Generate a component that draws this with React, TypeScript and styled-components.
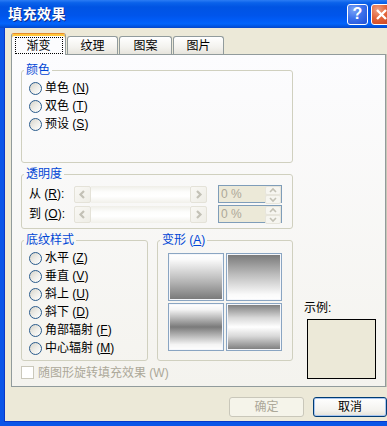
import styled, { createGlobalStyle } from 'styled-components'

const GlobalStyle = createGlobalStyle`
  html, body {
    margin: 0;
    padding: 0;
  }
  body {
    width: 387px;
    height: 426px;
    overflow: hidden;
    background: #ece9d8;
    font-family: 'Liberation Sans', 'Noto Sans CJK SC', sans-serif;
    font-size: 12px;
    color: #000;
  }
`

const Window = styled.div`
  width: 395px;
  height: 426px;
  display: flex;
  flex-direction: column;
`

const TitleBar = styled.div`
  flex: none;
  height: 28px;
  display: flex;
  align-items: center;
  gap: 3px;
  padding: 0 3px 0 8px;
  background: linear-gradient(
    to bottom,
    #2b7cf4 0%,
    #0a62ea 10%,
    #0054e3 25%,
    #0055eb 55%,
    #005bf5 70%,
    #0264fb 85%,
    #0054e0 94%,
    #0846c8 100%
  );
`

const TitleText = styled.div`
  flex: 1;
  color: #fff;
  font-size: 14px;
  font-weight: bold;
  line-height: 16px;
  letter-spacing: 0.5px;
  text-shadow: 1px 1px 0 #0a2a8a;
`

const TitleButton = styled.div<{ $kind: 'help' | 'close' }>`
  flex: none;
  box-sizing: border-box;
  width: 21px;
  height: 21px;
  border: 1px solid #fff;
  border-radius: 3px;
  display: flex;
  align-items: center;
  justify-content: center;
  color: #fff;
  font: bold 16px/1 'Liberation Sans', sans-serif;
  background: ${p =>
    p.$kind === 'help'
      ? 'radial-gradient(circle at 30% 25%, #7ba4f7 0%, #3d72ec 45%, #1d4fd6 100%)'
      : 'radial-gradient(circle at 30% 25%, #f0a184 0%, #e2643a 45%, #c9401b 100%)'};
`

const Frame = styled.div`
  flex: 1;
  display: flex;
  flex-direction: column;
  border: 4px solid #0a55e8;
  border-top: none;
  box-shadow: inset 1px 0 0 #0838c8, inset -1px 0 0 #0838c8, inset 0 -1px 0 #0838c8;
  background: #ece9d8;
`

const TabStrip = styled.div`
  flex: none;
  height: 26px;
  display: flex;
  align-items: flex-end;
  gap: 1px;
  padding-left: 7px;
`

const Tab = styled.div<{ $active?: boolean; $width: number }>`
  position: relative;
  box-sizing: border-box;
  width: ${p => p.$width}px;
  height: ${p => (p.$active ? 22 : 18)}px;
  margin-bottom: ${p => (p.$active ? -1 : 0)}px;
  z-index: ${p => (p.$active ? 1 : 0)};
  border: 1px solid #919b9c;
  border-bottom: none;
  border-top-color: ${p => (p.$active ? '#e68b2c' : '#919b9c')};
  border-radius: 3px 3px 0 0;
  box-shadow: ${p => (p.$active ? 'inset 0 2px 0 #ffc83c' : 'none')};
  background: ${p => (p.$active ? '#fcfcfe' : 'linear-gradient(#ffffff, #f3f2ee 60%, #e6e4dc)')};
  display: flex;
  justify-content: center;
  align-items: ${p => (p.$active ? 'flex-start' : 'center')};
  padding-top: ${p => (p.$active ? 3 : 0)}px;
  line-height: 14px;
`

const FocusLabel = styled.span`
  box-sizing: border-box;
  width: 48px;
  height: 17px;
  border: 1px dotted #000;
  display: flex;
  align-items: center;
  justify-content: center;
`

const Panel = styled.div`
  flex: none;
  box-sizing: border-box;
  height: 333px;
  margin: 0 5px 0 7px;
  border: 1px solid #919b9c;
  box-shadow: 1px 0 0 #c9c6b6, 2px 0 0 #dcd9cb;
  background: linear-gradient(#fcfcfe, #f4f3ee);
  padding: 8px 0 7px 9px;
  display: grid;
  grid-template-columns: 272px 1fr;
  column-gap: 11px;
`

const LeftColumn = styled.div`
  display: flex;
  flex-direction: column;
`

const Group = styled.fieldset<{ $height: number; $width?: number; $gap?: number }>`
  box-sizing: border-box;
  width: ${p => (p.$width ? `${p.$width}px` : 'auto')};
  height: ${p => p.$height}px;
  margin: 0 0 ${p => p.$gap ?? 0}px 0;
  padding: 0;
  min-width: 0;
  border: 1px solid #d0d0bf;
  border-radius: 3px;
`

const GroupTitle = styled.legend`
  margin-left: 2px;
  padding: 0 2px;
  color: #0046d5;
  font-size: 12px;
  line-height: 14px;
`

const OptionList = styled.div`
  padding: 2px 0 0 7px;
  display: flex;
  flex-direction: column;
`

const OptionRow = styled.label`
  height: 18px;
  display: flex;
  align-items: center;
  gap: 3px;
  line-height: 14px;
  white-space: nowrap;
`

const Radio = styled.span`
  flex: none;
  box-sizing: border-box;
  width: 13px;
  height: 13px;
  border-radius: 50%;
  border: 1px solid #2a5b8c;
  background: linear-gradient(135deg, #d6d3c9 0%, #eeede8 50%, #ffffff 100%);
`

const Mnemonic = styled.u`
  text-underline-offset: 1px;
`

const SliderList = styled.div`
  padding: 4px 0 0 7px;
  display: flex;
  flex-direction: column;
  gap: 2px;
`

const SliderRow = styled.div`
  height: 18px;
  display: flex;
  align-items: center;
`

const RowLabel = styled.span`
  width: 45px;
  line-height: 14px;
  white-space: nowrap;
`

const ScrollBar = styled.div`
  width: 133px;
  height: 17px;
  margin-right: 11px;
  display: flex;
`

const ScrollTrack = styled.div`
  flex: 1;
  background: linear-gradient(#efeee8, #fdfdfc 35%, #ffffff 60%, #f1f0ea);
`

const ArrowButton = styled.div`
  box-sizing: border-box;
  width: 17px;
  height: 17px;
  border: 1px solid #e4e2d8;
  border-radius: 2px;
  background: linear-gradient(135deg, #f9f8f4, #eeede6);
  display: flex;
  align-items: center;
  justify-content: center;
`

const SpinBox = styled.div`
  box-sizing: border-box;
  width: 64px;
  height: 18px;
  border: 1px solid #7f9db9;
  background: #ece9d8;
  display: flex;
  align-items: center;
`

const SpinText = styled.span`
  flex: 1;
  padding-left: 2px;
  color: #aca899;
  line-height: 14px;
`

const SpinButtons = styled.div`
  width: 16px;
  height: 16px;
  display: flex;
  flex-direction: column;
`

const SpinButton = styled.div`
  flex: 1;
  box-sizing: border-box;
  border: 1px solid #e7e5dc;
  border-radius: 2px;
  background: #f6f5f0;
  display: flex;
  align-items: center;
  justify-content: center;
`

const GroupRow = styled.div`
  display: flex;
  gap: 9px;
  margin-bottom: 5px;
`

const TileGrid = styled.div`
  padding: 6px 0 0 10px;
  display: grid;
  grid-template-columns: 56px 56px;
  grid-auto-rows: 48px;
  gap: 2px;
`

const gradients = {
  down: 'linear-gradient(#ffffff 0%, #fafafa 12%, #bdbdbd 55%, #777777 100%)',
  up: 'linear-gradient(#777777 0%, #bdbdbd 45%, #fafafa 88%, #ffffff 100%)',
  middle: 'linear-gradient(#ffffff 0%, #f4f4f4 12%, #7a7a7a 50%, #f4f4f4 88%, #ffffff 100%)',
  edges: 'linear-gradient(#7a7a7a 0%, #d8d8d8 30%, #ffffff 50%, #d8d8d8 70%, #7a7a7a 100%)',
}

const Tile = styled.div<{ $kind: keyof typeof gradients }>`
  box-sizing: border-box;
  border: 1px solid #8aa5c2;
  box-shadow: inset 0 0 0 1px #f4f6fa;
  background: ${p => gradients[p.$kind]};
`

const CheckRow = styled.div`
  height: 13px;
  display: flex;
  align-items: center;
  gap: 4px;
  color: #aca899;
  line-height: 14px;
  white-space: nowrap;
`

const CheckBox = styled.span`
  box-sizing: border-box;
  width: 13px;
  height: 13px;
  border: 1px solid #cac8bb;
  background: #fff;
`

const SampleColumn = styled.div`
  display: flex;
  flex-direction: column;
  justify-content: flex-end;
`

const SampleLabel = styled.div`
  line-height: 14px;
  margin-bottom: 4px;
`

const SampleBox = styled.div`
  box-sizing: border-box;
  width: 69px;
  height: 60px;
  margin-left: 3px;
  border: 1px solid #000;
  background: #ece9d8;
`

const ButtonRow = styled.div`
  display: flex;
  justify-content: flex-end;
  gap: 9px;
  padding: 10px 4px 0 0;
`

const Button = styled.button<{ $width: number; $default?: boolean }>`
  box-sizing: border-box;
  width: ${p => p.$width}px;
  height: 20px;
  padding: 0;
  border: 1px solid #003c74;
  border-radius: 3px;
  background: linear-gradient(#ffffff, #f3f2ee 70%, #e4e2d8);
  box-shadow: ${p => (p.$default ? 'inset 0 0 0 1px #a9c6f0' : 'none')};
  font: 12px/14px 'Liberation Sans', 'Noto Sans CJK SC', sans-serif;
  color: #000;

  &:disabled {
    border-color: #c9c7ba;
    background: #f5f4ea;
    color: #aca899;
  }
`

const Chevron = ({ dir }: { dir: 'left' | 'right' | 'up' | 'down' }) => {
  const d = {
    left: 'M9 4 L5.5 7.5 L9 11',
    right: 'M6 4 L9.5 7.5 L6 11',
    up: 'M4 5 L7 2 L10 5',
    down: 'M4 2 L7 5 L10 2',
  }[dir]
  const small = dir === 'up' || dir === 'down'
  return (
    <svg width={small ? 14 : 15} height={small ? 7 : 15} viewBox={small ? '0 0 14 7' : '0 0 15 15'}>
      <path d={d} fill="none" stroke="#c3c1b6" strokeWidth={small ? 1.6 : 2.2} />
    </svg>
  )
}

const colorOptions = [
  { text: '单色', key: 'N' },
  { text: '双色', key: 'T' },
  { text: '预设', key: 'S' },
]

const shadeOptions = [
  { text: '水平', key: 'Z' },
  { text: '垂直', key: 'V' },
  { text: '斜上', key: 'U' },
  { text: '斜下', key: 'D' },
  { text: '角部辐射', key: 'F' },
  { text: '中心辐射', key: 'M' },
]

const sliders = [
  { text: '从', key: 'R' },
  { text: '到', key: 'O' },
]

const tabs = [
  { text: '渐变', width: 55 },
  { text: '纹理', width: 51 },
  { text: '图案', width: 53 },
  { text: '图片', width: 51 },
]

export default function App() {
  return (
    <>
      <GlobalStyle />
      <Window>
        <TitleBar>
          <TitleText>填充效果</TitleText>
          <TitleButton $kind="help">?</TitleButton>
          <TitleButton $kind="close">
            <svg width="13" height="13" viewBox="0 0 13 13">
              <path d="M2 2 L11 11 M11 2 L2 11" stroke="#fff" strokeWidth="2.4" />
            </svg>
          </TitleButton>
        </TitleBar>
        <Frame>
          <TabStrip>
            {tabs.map((t, i) => (
              <Tab key={t.text} $active={i === 0} $width={t.width}>
                {i === 0 ? <FocusLabel>{t.text}</FocusLabel> : t.text}
              </Tab>
            ))}
          </TabStrip>
          <Panel>
            <LeftColumn>
              <Group $height={100} $gap={4}>
                <GroupTitle>颜色</GroupTitle>
                <OptionList>
                  {colorOptions.map(o => (
                    <OptionRow key={o.key}>
                      <Radio />
                      <span>
                        {o.text} (<Mnemonic>{o.key}</Mnemonic>)
                      </span>
                    </OptionRow>
                  ))}
                </OptionList>
              </Group>
              <Group $height={62} $gap={4}>
                <GroupTitle>透明度</GroupTitle>
                <SliderList>
                  {sliders.map(s => (
                    <SliderRow key={s.key}>
                      <RowLabel>
                        {s.text} (<Mnemonic>{s.key}</Mnemonic>):
                      </RowLabel>
                      <ScrollBar>
                        <ArrowButton>
                          <Chevron dir="left" />
                        </ArrowButton>
                        <ScrollTrack />
                        <ArrowButton>
                          <Chevron dir="right" />
                        </ArrowButton>
                      </ScrollBar>
                      <SpinBox>
                        <SpinText>0 %</SpinText>
                        <SpinButtons>
                          <SpinButton>
                            <Chevron dir="up" />
                          </SpinButton>
                          <SpinButton>
                            <Chevron dir="down" />
                          </SpinButton>
                        </SpinButtons>
                      </SpinBox>
                    </SliderRow>
                  ))}
                </SliderList>
              </Group>
              <GroupRow>
                <Group $height={128} $width={127}>
                  <GroupTitle>底纹样式</GroupTitle>
                  <OptionList>
                    {shadeOptions.map(o => (
                      <OptionRow key={o.key}>
                        <Radio />
                        <span>
                          {o.text} (<Mnemonic>{o.key}</Mnemonic>)
                        </span>
                      </OptionRow>
                    ))}
                  </OptionList>
                </Group>
                <Group $height={128} $width={136}>
                  <GroupTitle>
                    变形 (<Mnemonic>A</Mnemonic>)
                  </GroupTitle>
                  <TileGrid>
                    <Tile $kind="down" />
                    <Tile $kind="up" />
                    <Tile $kind="middle" />
                    <Tile $kind="edges" />
                  </TileGrid>
                </Group>
              </GroupRow>
              <CheckRow>
                <CheckBox />
                <span>随图形旋转填充效果 (W)</span>
              </CheckRow>
            </LeftColumn>
            <SampleColumn>
              <SampleLabel>示例:</SampleLabel>
              <SampleBox />
            </SampleColumn>
          </Panel>
          <ButtonRow>
            <Button $width={75} disabled>
              确定
            </Button>
            <Button $width={74} $default>
              取消
            </Button>
          </ButtonRow>
        </Frame>
      </Window>
    </>
  )
}
